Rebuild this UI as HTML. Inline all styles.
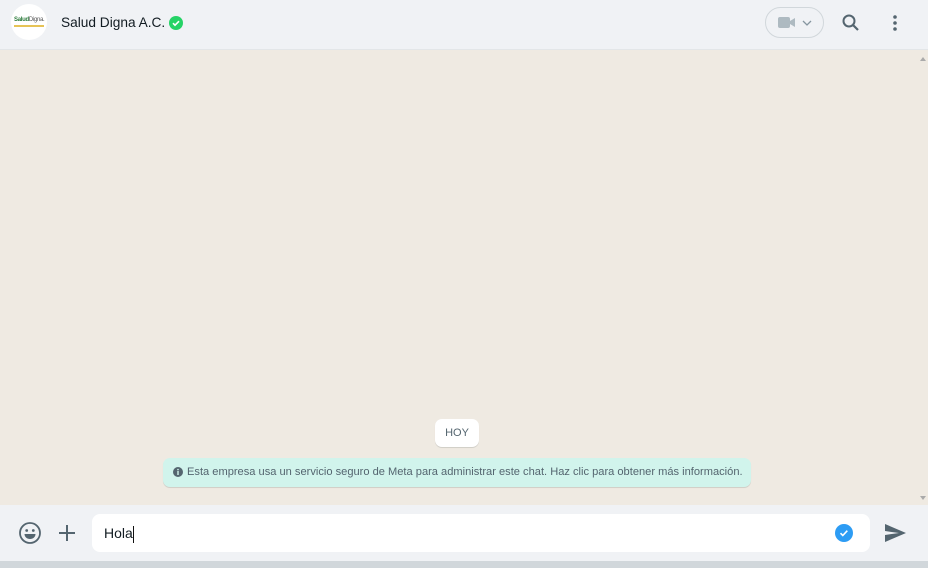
<!DOCTYPE html>
<html><head><meta charset="utf-8"><style>
*{margin:0;padding:0;box-sizing:border-box}
body{width:928px;height:568px;overflow:hidden;font-family:"Liberation Sans",sans-serif;background:#efeae2;position:relative}
.hdr{position:absolute;left:0;top:0;width:928px;height:50px;background:#f0f2f5;border-bottom:1px solid #e3e6e8}
.av{position:absolute;left:11px;top:4px;width:36px;height:36px;border-radius:50%;background:#fff;overflow:hidden}
.name{position:absolute;left:61px;top:15px;font-size:13.7px;color:#111b21}
.chat{position:absolute;left:0;top:50px;width:928px;height:455px;background:#efeae2}
.sb{position:absolute;right:0;top:50px;width:10px;height:455px;background:#efeae2}
.hoy{position:absolute;left:435px;top:419px;width:44px;height:28px;background:#fff;border-radius:7px;font-size:11px;color:#54656f;text-align:center;line-height:28px;box-shadow:0 1px .5px rgba(11,20,26,.13)}
.info{position:absolute;left:163px;top:458px;width:588px;height:29px;background:#d1f4ec;border-radius:7px;font-size:11.1px;color:#54656f;line-height:28px;padding-left:24px;box-shadow:0 1px .5px rgba(11,20,26,.13);white-space:nowrap}
.ftr{position:absolute;left:0;top:505px;width:928px;height:56px;background:#f0f2f5}
.bot{position:absolute;left:0;top:561px;width:928px;height:7px;background:#d1d7db}
.inp{position:absolute;left:92px;top:514px;width:778px;height:38px;background:#fff;border-radius:8px;font-size:14px;color:#111b21;line-height:38px;padding-left:12px}
</style></head><body>
<div class="hdr">
 <div class="av"><div style="position:absolute;left:3px;top:13px;font-size:6px;font-weight:bold;color:#2a7a3a;letter-spacing:-.3px">Salud<span style="color:#555;font-weight:normal">Digna.</span></div><div style="position:absolute;left:3px;top:21px;width:30px;height:2px;background:#e6c356"></div></div>
 <div class="name">Salud Digna A.C.</div>
 <svg style="position:absolute;left:169px;top:16px" width="14" height="14" viewBox="0 0 14 14"><circle cx="7" cy="7" r="7" fill="#25d366"/><path d="M4 7.2l2 2 4-4" stroke="#fff" stroke-width="1.6" fill="none"/></svg>
 <div style="position:absolute;left:765px;top:7px;width:59px;height:31px;border:1px solid #d1d7db;border-radius:16px"></div>
 <svg style="position:absolute;left:777px;top:16px" width="40" height="14" viewBox="0 0 40 14"><rect x="1" y="1" width="12" height="11" rx="2" fill="#aebac1"/><path d="M13 5l5-3v9l-5-3z" fill="#aebac1"/><path d="M26 5l4 4 4-4" stroke="#8696a0" stroke-width="1.3" fill="none"/></svg>
 <svg style="position:absolute;left:841px;top:13px" width="20" height="20" viewBox="0 0 20 20"><circle cx="8" cy="8" r="5.5" stroke="#54656f" stroke-width="2" fill="none"/><path d="M12 12l5 5" stroke="#54656f" stroke-width="2.2"/></svg>
 <svg style="position:absolute;left:891px;top:14px" width="8" height="18" viewBox="0 0 8 18"><circle cx="4" cy="3" r="1.8" fill="#54656f"/><circle cx="4" cy="9" r="1.8" fill="#54656f"/><circle cx="4" cy="15" r="1.8" fill="#54656f"/></svg>
</div>
<div class="chat"></div>
<div class="sb"><div style="position:absolute;left:2px;top:4px;border:3px solid transparent;border-bottom:4px solid #aaa;width:0;height:0"></div><div style="position:absolute;left:2px;bottom:2px;border:3px solid transparent;border-top:4px solid #aaa;width:0;height:0"></div></div>
<div class="hoy">HOY</div>
<div class="info"><svg style="position:absolute;left:10px;top:9px" width="10" height="10" viewBox="0 0 10 10"><circle cx="5" cy="5" r="5" fill="#54656f"/><rect x="4.3" y="4" width="1.4" height="4" fill="#d1f4ec"/><circle cx="5" cy="2.6" r=".8" fill="#d1f4ec"/></svg>Esta empresa usa un servicio seguro de Meta para administrar este chat. Haz clic para obtener más información.</div>
<div class="ftr">
 <svg style="position:absolute;left:18px;top:16px" width="24" height="24" viewBox="0 0 24 24"><circle cx="12" cy="12" r="10" stroke="#54656f" stroke-width="1.8" fill="none"/><circle cx="8.7" cy="9.5" r="1.4" fill="#54656f"/><circle cx="15.3" cy="9.5" r="1.4" fill="#54656f"/><path d="M6.5 13h11c0 3-2.5 5-5.5 5s-5.5-2-5.5-5z" fill="#54656f"/></svg>
 <svg style="position:absolute;left:57px;top:18px" width="20" height="20" viewBox="0 0 20 20"><path d="M10 2v16M2 10h16" stroke="#54656f" stroke-width="2"/></svg>
 <svg style="position:absolute;left:884px;top:18px" width="24" height="20" viewBox="0 0 24 20"><path d="M1 1l21 9L1 19l0-7 14-2L1 8z" fill="#54656f"/></svg>
</div>
<div class="inp">Hola<span style="display:inline-block;width:1px;height:17px;background:#111;vertical-align:middle"></span>
 <svg style="position:absolute;left:743px;top:10px" width="18" height="18" viewBox="0 0 18 18"><circle cx="9" cy="9" r="9" fill="#2d9cf4"/><path d="M5.5 9.2l2.3 2.3 4.5-4.8" stroke="#fff" stroke-width="1.6" fill="none"/></svg>
</div>
<div class="bot"></div>
</body></html>
